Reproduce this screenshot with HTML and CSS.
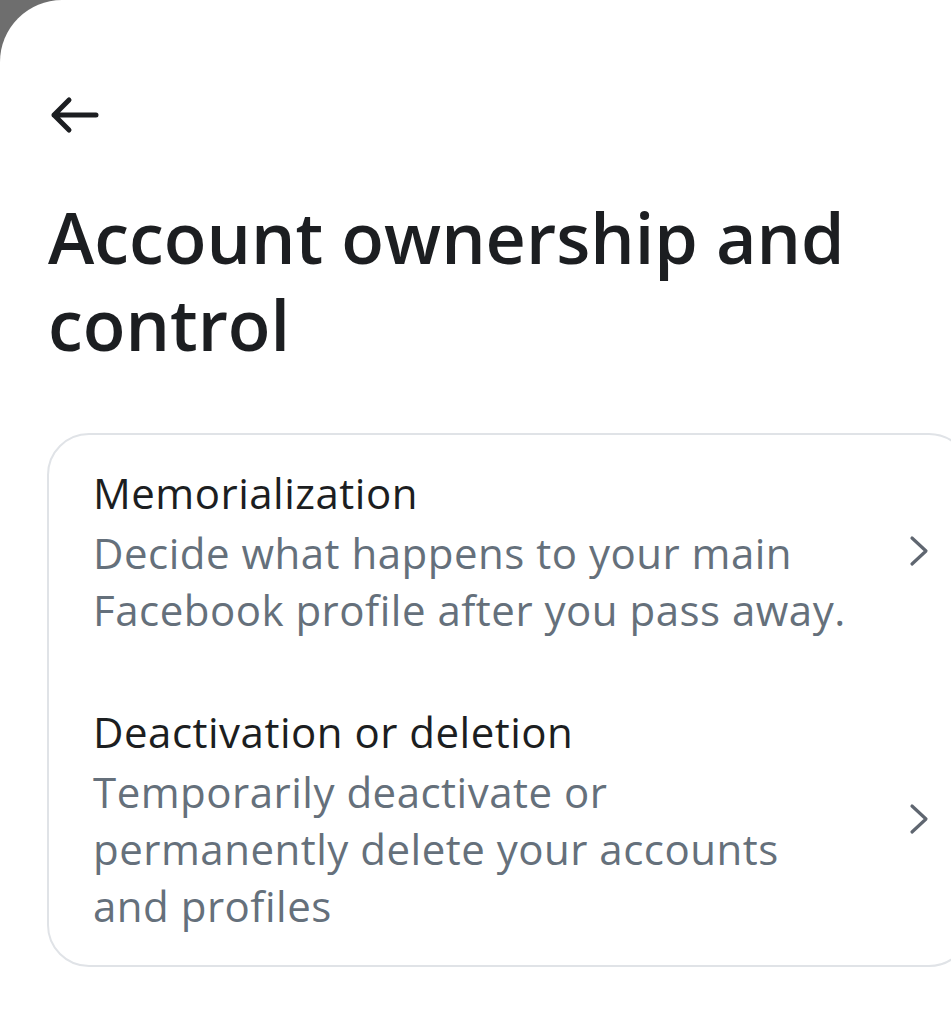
FILE: index.html
```html
<!DOCTYPE html>
<html lang="en">
<head>
<meta charset="utf-8">
<title>Account ownership and control</title>
<link rel="stylesheet" href="styles.css">
</head>
<body>
<div class="sheet">
  <div class="topbar">
    <svg class="back" width="50" height="38" viewBox="0 0 50 38" aria-label="Back">
      <path d="M46 19 H4 M19 4 L4 19 L19 34" fill="none" stroke="#1c1e21" stroke-width="5" stroke-linecap="round" stroke-linejoin="round"/>
    </svg>
  </div>
  <h1 class="heading">Account ownership and control</h1>
  <div class="card">
    <div class="row">
      <div class="text">
        <div class="title">Memorialization</div>
        <div class="desc">Decide what happens to your main Facebook profile after you pass away.</div>
      </div>
      <svg class="chev" width="22" height="32" viewBox="0 0 22 32"><path d="M4 3 L18 16 L4 29" fill="none" stroke="#5f6670" stroke-width="3.2" stroke-linecap="round" stroke-linejoin="round"/></svg>
    </div>
    <div class="row">
      <div class="text">
        <div class="title">Deactivation or deletion</div>
        <div class="desc">Temporarily deactivate or permanently delete your accounts and profiles</div>
      </div>
      <svg class="chev" width="22" height="32" viewBox="0 0 22 32"><path d="M4 3 L18 16 L4 29" fill="none" stroke="#5f6670" stroke-width="3.2" stroke-linecap="round" stroke-linejoin="round"/></svg>
    </div>
  </div>
</div>
</body>
</html>
```

FILE: styles.css
```css
html, body {
  margin: 0;
  padding: 0;
}
body {
  background: #6e6e6e;
  font-family: "Open Sans", "Noto Sans", sans-serif;
}
.sheet {
  background: #ffffff;
  border-top-left-radius: 62px;
  min-height: 1024px;
  overflow: hidden;
}
.topbar {
  padding: 96px 0 0 50px;
  height: 38px;
}
.back {
  display: block;
}
.heading {
  margin: 60px 0 0 48px;
  width: 860px;
  font-size: 70px;
  font-weight: 600;
  line-height: 87px;
  color: #1c1e21;
  letter-spacing: 0;
}
.card {
  margin: 65px 0 0 47px;
  width: 924px;
  border: 2px solid #e0e3e7;
  border-radius: 42px;
  box-sizing: border-box;
  display: flex;
  flex-direction: column;
  gap: 6px;
}
.row {
  display: flex;
  align-items: center;
  padding: 29px 39px 30px 44px;
}
.row:last-child {
  padding-bottom: 31px;
}
.text {
  flex: 1;
  min-width: 0;
  padding-right: 47px;
}
.title {
  font-size: 42px;
  line-height: 57px;
  margin-bottom: 3px;
  color: #1c1e21;
  letter-spacing: 0.5px;
}
.desc {
  font-size: 42px;
  line-height: 57px;
  color: #65707b;
  letter-spacing: 0.5px;
}
.chev {
  flex: none;
}
```
